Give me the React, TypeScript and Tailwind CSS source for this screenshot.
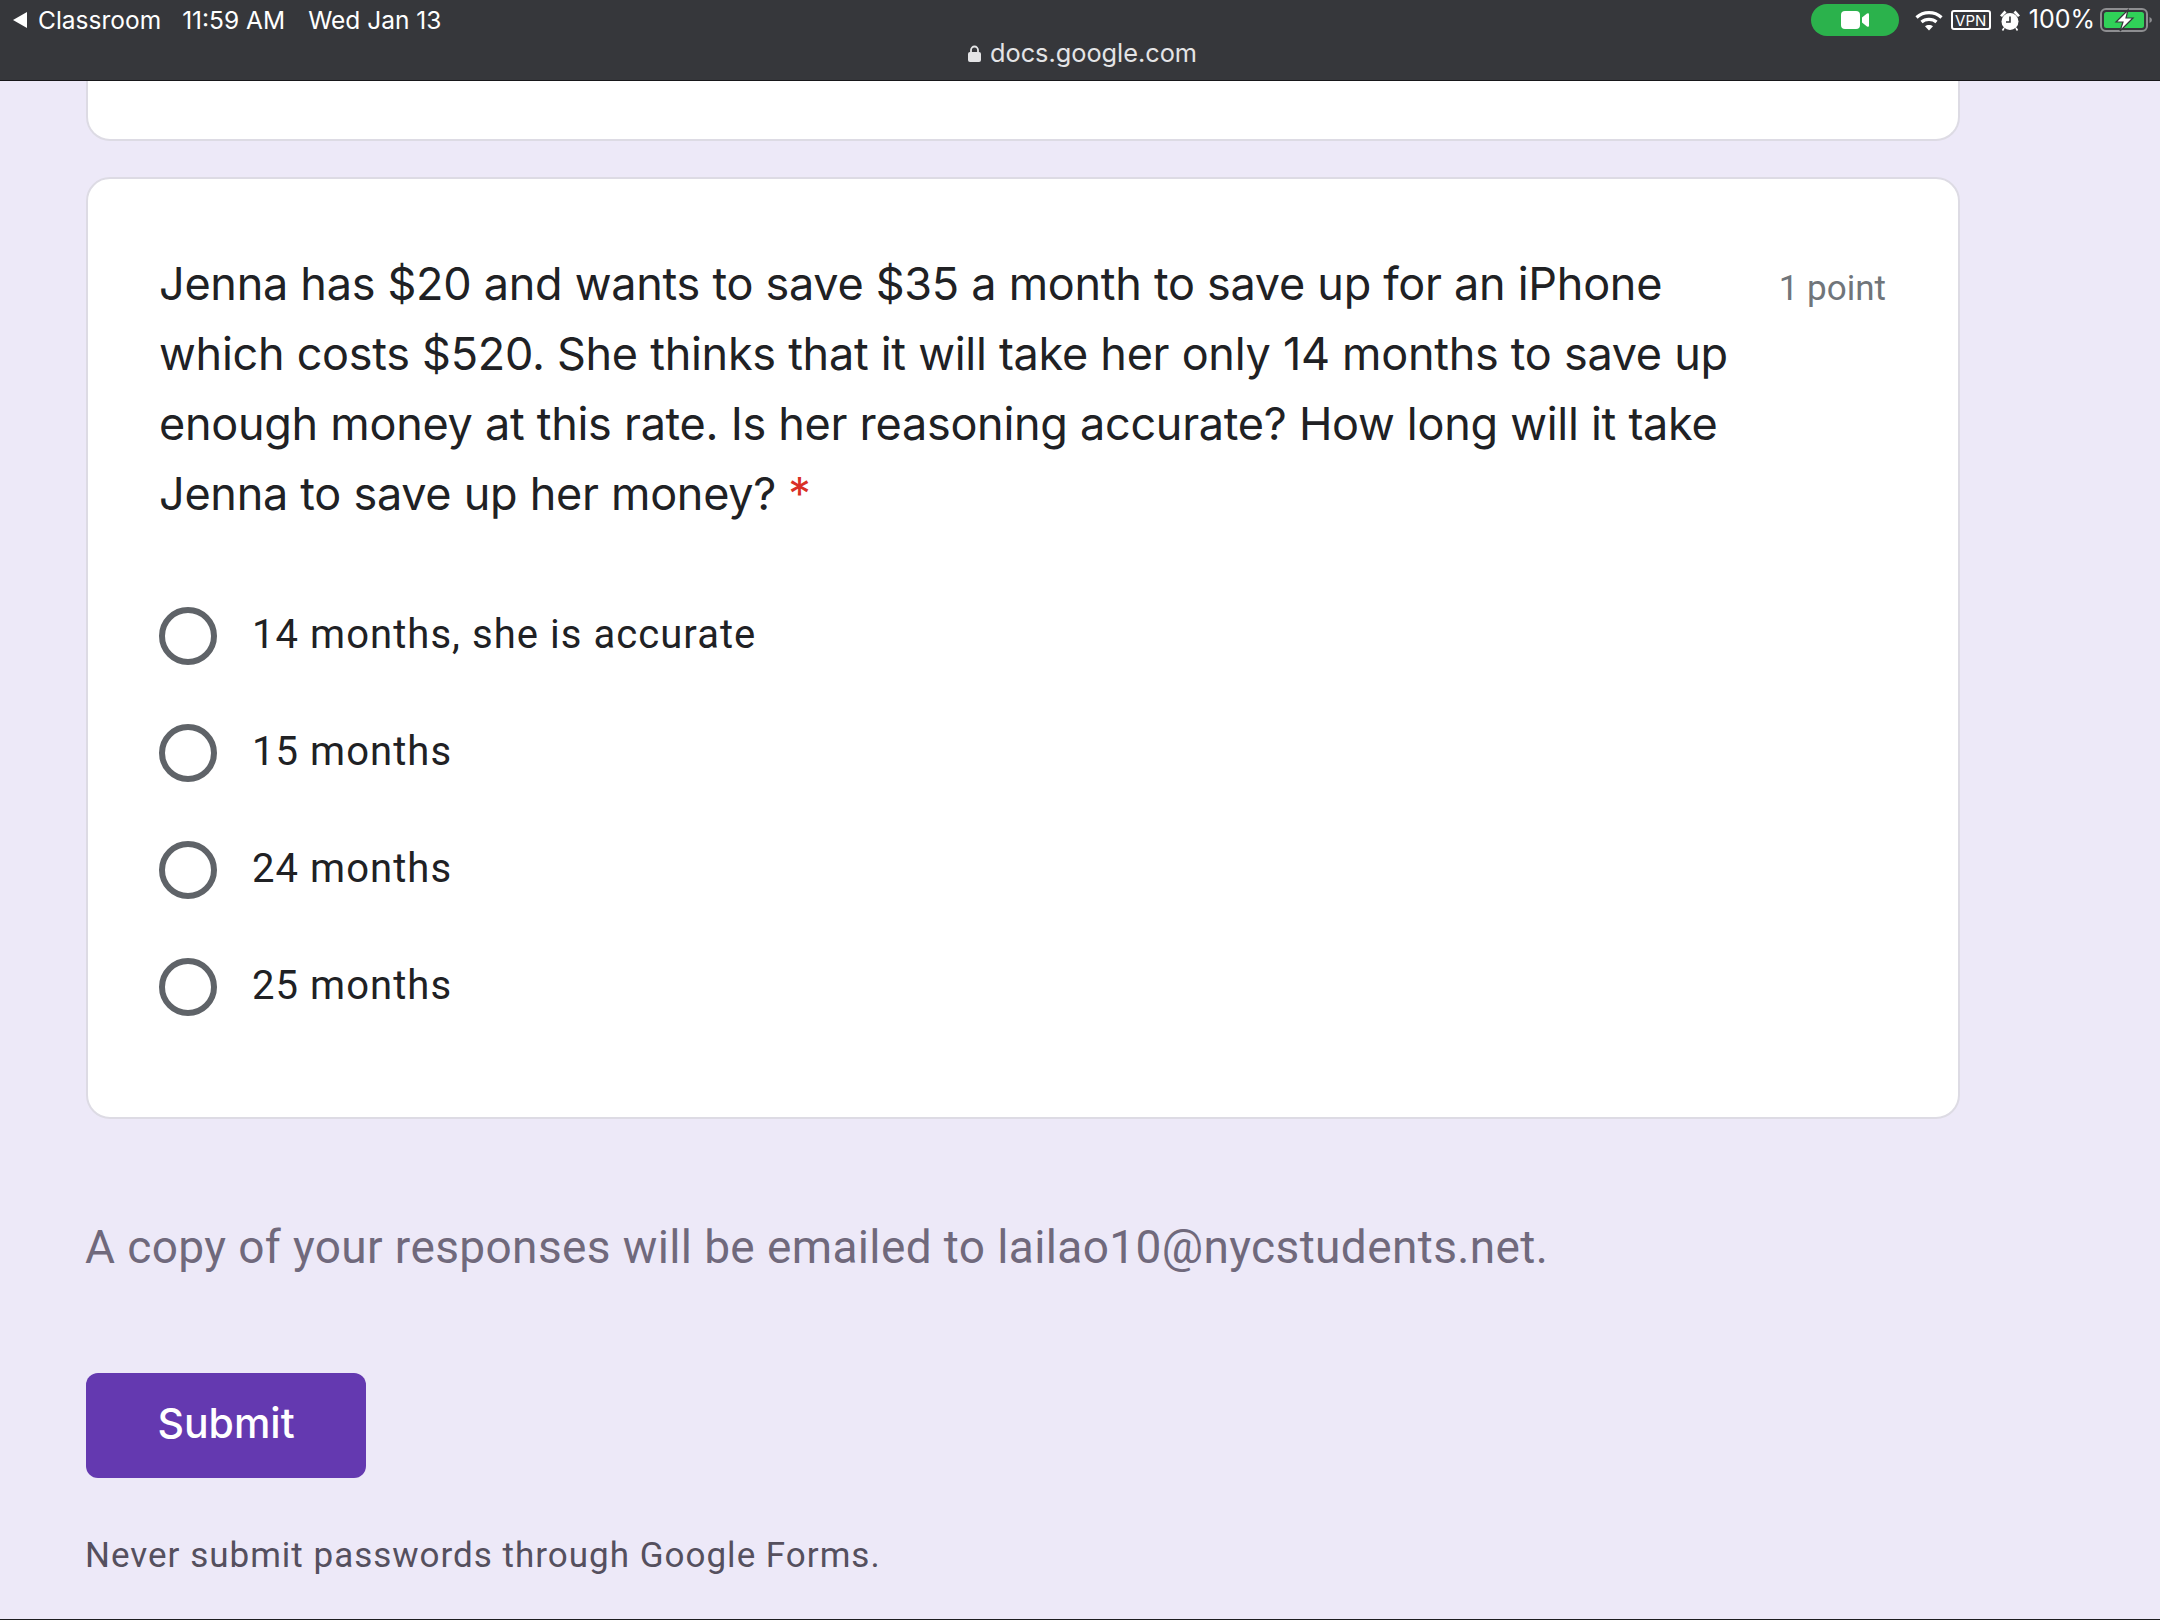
const options = ['14 months, she is accurate', '15 months', '24 months', '25 months']

function CameraPill() {
  return (
    <div className="w-[88px] h-[32px] rounded-full bg-[#2bb24c] flex items-center justify-center">
      <svg width="28" height="20" viewBox="0 0 28 20">
        <rect x="0" y="1" width="19" height="18" rx="4" fill="#fff" />
        <path d="M21 7.5 L26 3.5 Q28 2.5 28 4.5 V15.5 Q28 17.5 26 16.5 L21 12.5 Z" fill="#fff" />
      </svg>
    </div>
  )
}

function Wifi() {
  return (
    <svg width="28" height="21" viewBox="0 0 28 21" fill="none" stroke="#fff" strokeWidth="3.2">
      <path d="M1.5 7.5 C8.5 1 19.5 1 26.5 7.5" />
      <path d="M6.5 12 C10.5 8.5 17.5 8.5 21.5 12" />
      <path d="M14 20.5 L10 16.2 C12 14.6 16 14.6 18 16.2 Z" fill="#fff" stroke="none" />
    </svg>
  )
}

function Alarm() {
  return (
    <svg width="20" height="21" viewBox="0 0 20 21">
      <circle cx="10" cy="11.5" r="8.5" fill="#fff" />
      <path d="M0 5.5 L4.5 0.5 L6.5 2.5 L2 7 Z M20 5.5 L15.5 0.5 L13.5 2.5 L18 7 Z" fill="#fff" />
      <path d="M10 6.5 V12 H6" fill="none" stroke="#36373b" strokeWidth="1.6" />
      <path d="M4 18 L2.5 20.5 M16 18 L17.5 20.5" stroke="#fff" strokeWidth="1.6" />
    </svg>
  )
}

function Battery() {
  return (
    <svg width="52" height="24" viewBox="0 0 52 24">
      <rect x="1" y="1" width="46" height="22" rx="5" fill="none" stroke="#8e8e91" strokeWidth="2" />
      <rect x="4" y="4" width="40" height="16" rx="2.5" fill="#30d158" />
      <path d="M49.5 9 Q52 10 52 12 Q52 14 49.5 15 Z" fill="#8e8e91" />
      <path d="M28 2 L16 14 H23 L20 23 L33 10 H26 Z" fill="#fff" stroke="#36373b" strokeWidth="1.2" />
    </svg>
  )
}

function StatusBar() {
  return (
    <div className="h-[81px] bg-[#36373b] border-b border-[#17171a] text-white font-['Inter',sans-serif] shrink-0">
      <div className="h-[40px] pl-[13px] pr-[8px] flex items-center justify-between text-[24.5px]">
        <div className="flex items-center">
          <svg width="14" height="16" viewBox="0 0 14 16" className="mr-[11px]">
            <path d="M14 0 V16 L0 8 Z" fill="#fff" />
          </svg>
          <span>Classroom</span>
          <span className="ml-[21px]">11:59 AM</span>
          <span className="ml-[23px]">Wed Jan 13</span>
        </div>
        <div className="flex items-center">
          <CameraPill />
          <div className="ml-[16px]"><Wifi /></div>
          <div className="ml-[8px] h-[20px] w-[40px] border-2 border-white rounded-[3px] flex items-center justify-center text-[15px] leading-none">VPN</div>
          <div className="ml-[9px]"><Alarm /></div>
          <span className="ml-[9px] text-[25px]">100%</span>
          <div className="ml-[5px]"><Battery /></div>
        </div>
      </div>
      <div className="flex items-center justify-center h-[26px] pl-[5px] text-[25.3px] text-[#e4e4e6]">
        <svg width="13" height="17" viewBox="0 0 13 17" className="mr-[9px]">
          <path d="M3 8 V5 a3.5 3.5 0 0 1 7 0 V8" fill="none" stroke="#e4e4e6" strokeWidth="1.8" />
          <rect x="0" y="7" width="13" height="10" rx="2" fill="#e4e4e6" />
        </svg>
        <span>docs.google.com</span>
      </div>
    </div>
  )
}

export default function App() {
  return (
    <div className="h-[1620px] overflow-hidden bg-[#ede9f8] flex flex-col border-b border-[#1c1c1f]">
      <StatusBar />
      <div className="pl-[86px] w-[1960px] font-['Roboto',sans-serif]">
        <div className="h-[60px] bg-white border-2 border-t-0 border-[#dddbe4] rounded-b-[24px]" />

        <div className="mt-[36px] bg-white border-2 border-[#dddbe4] rounded-[24px] pl-[71px] pr-[72px] pt-[70px] pb-[72px]">
          <div className="flex justify-between">
            <div className="w-[1590px] text-[#202124] text-[45px] leading-[70px] font-['Inter',sans-serif] tracking-[-0.28px]">
              Jenna has $20 and wants to save $35 a month to save up for an iPhone which costs $520. She thinks that it will take her only 14 months to save up enough money at this rate. Is her reasoning accurate? How long will it take Jenna to save up her money? <span className="text-[#d93025]">*</span>
            </div>
            <div className="pt-[5px] text-[35px] leading-[70px] text-[#70757a] whitespace-nowrap">1 point</div>
          </div>

          <div className="mt-[48px] flex flex-col">
            {options.map((opt) => (
              <div key={opt} className="h-[117px] flex items-center">
                <div className="w-[58px] h-[58px] rounded-full border-[6px] border-[#5f6368] shrink-0" />
                <span className="ml-[35px] pb-[2px] text-[40px] text-[#202124] tracking-[1.05px]">{opt}</span>
              </div>
            ))}
          </div>
        </div>

        <div className="mt-[93px] -ml-[1px] text-[46px] leading-[70px] text-[#70697c] tracking-[0.38px] whitespace-nowrap">
          A copy of your responses will be emailed to lailao10@nycstudents.net.
        </div>

        <button className="mt-[91px] w-[280px] h-[105px] pb-[3px] bg-[#6439b0] rounded-[12px] text-white text-[41px] font-medium font-['Inter',sans-serif] block">
          Submit
        </button>

        <div className="mt-[56px] -ml-[1px] text-[35px] leading-[44px] text-[#55505e] tracking-[1px] whitespace-nowrap">
          Never submit passwords through Google Forms.
        </div>
      </div>
    </div>
  )
}
